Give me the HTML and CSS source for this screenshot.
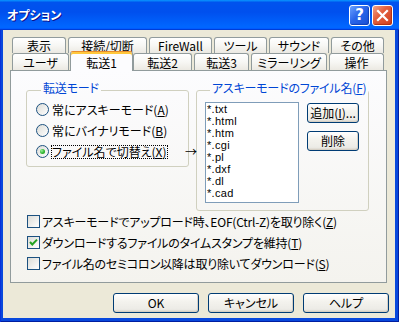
FILE: index.html
```html
<!DOCTYPE html>
<html lang="ja">
<head>
<meta charset="utf-8">
<title>オプション</title>
<link rel="stylesheet" href="styles.css">
</head>
<body>
<div class="window">
  <div class="titlebar">
    <span class="title">オプション</span>
    <div class="caption-buttons">
      <span class="cap help">?</span>
      <span class="cap close"><svg width="19" height="19" viewBox="0 0 19 19"><path d="M5 5 L14 14 M14 5 L5 14" stroke="#fff" stroke-width="2.2" stroke-linecap="square"/></svg></span>
    </div>
  </div>
  <div class="client">
    <div class="tabs">
      <div class="tabrow row1">
        <div class="tab w54">表示</div>
        <div class="tab w79">接続/切断</div>
        <div class="tab w63">FireWall</div>
        <div class="tab w53">ツール</div>
        <div class="tab w60">サウンド</div>
        <div class="tab w53">その他</div>
      </div>
      <div class="tabrow row2">
        <div class="tab w57">ユーザ</div>
        <div class="tab sel">転送1</div>
        <div class="tab w59 after-sel">転送2</div>
        <div class="tab w55">転送3</div>
        <div class="tab w76">ミラーリング</div>
        <div class="tab w55">操作</div>
      </div>
    </div>
    <div class="panel">
      <div class="groups">
        <fieldset class="group g1">
          <legend>転送モード</legend>
          <div class="radio"><span class="rb"></span><span class="lbl">常にアスキーモード(<u>A</u>)</span></div>
          <div class="radio"><span class="rb"></span><span class="lbl">常にバイナリモード(<u>B</u>)</span></div>
          <div class="radio"><span class="rb on"></span><span class="lbl focus">ファイル名で切替え(<u>X</u>)</span></div>
        </fieldset>
        <span class="arrow">→</span>
        <fieldset class="group g2">
          <legend>アスキーモードのファイル名(<u>F</u>)</legend>
          <div class="g2body">
            <div class="listbox">
              <div class="item">*.txt</div>
              <div class="item">*.html</div>
              <div class="item">*.htm</div>
              <div class="item">*.cgi</div>
              <div class="item">*.pl</div>
              <div class="item">*.dxf</div>
              <div class="item">*.dl</div>
              <div class="item">*.cad</div>
            </div>
            <div class="side">
              <span class="btn small">追加(<u>I</u>)...</span>
              <span class="btn small">削除</span>
            </div>
          </div>
        </fieldset>
      </div>
      <div class="checks">
        <div class="check"><span class="cb"></span><span class="clbl">アスキーモードでアップロード時、EOF(Ctrl-Z)を取り除く(<u>Z</u>)</span></div>
        <div class="check"><span class="cb"><svg width="11" height="11" viewBox="0 0 11 11"><path d="M2 5 L4.3 7.5 L9 2.6" fill="none" stroke="#21A121" stroke-width="2"/></svg></span><span class="clbl">ダウンロードするファイルのタイムスタンプを維持(<u>T</u>)</span></div>
        <div class="check"><span class="cb"></span><span class="clbl">ファイル名のセミコロン以降は取り除いてダウンロード(<u>S</u>)</span></div>
      </div>
    </div>
    <div class="buttons">
      <span class="btn big">OK</span>
      <span class="btn big">キャンセル</span>
      <span class="btn big">ヘルプ</span>
    </div>
  </div>
</div>
</body>
</html>
```
FILE: styles.css
```css
* { box-sizing: border-box; }
html, body { margin: 0; padding: 0; }
body {
  width: 399px;
  height: 322px;
  overflow: hidden;
  background: #fff;
  font-family: "Noto Sans CJK JP", "Noto Sans", sans-serif;
  font-size: 12px;
  line-height: 12px;
  color: #000;
  font-feature-settings: "palt";
}
.window {
  width: 399px;
  height: 322px;
  display: flex;
  flex-direction: column;
  background: #0848DC;
  box-shadow: inset 1px 0 #0831D9, inset -1px 0 #001EA0, inset 0 -1px #001EA0;
}
.titlebar {
  height: 30px;
  flex: none;
  display: flex;
  align-items: center;
  justify-content: space-between;
  padding: 0 6px 0 7px;
  background: linear-gradient(180deg, #0997ff, #0053ee 8%, #0050ee 40%, #06f 88%, #06f 93%, #005bff 95%, #003dd7 96%, #003dd7);
}
.title {
  color: #fff;
  font-weight: bold;
  font-size: 12px;
  line-height: 14px;
  text-shadow: 1px 1px #0f1089;
}
.caption-buttons { display: flex; gap: 2px; }
.cap {
  width: 21px;
  height: 21px;
  border: 1px solid #fff;
  border-radius: 3px;
  display: flex;
  align-items: center;
  justify-content: center;
  color: #fff;
}
.help {
  background: linear-gradient(135deg, #6aa2ff 0%, #2a66ea 45%, #1a4fd4 100%);
  box-shadow: inset -1px -1px 1px #1140b8;
  font-family: "DejaVu Sans", sans-serif;
  font-weight: bold;
  font-size: 15px;
  line-height: 15px;
}
.close {
  background: linear-gradient(135deg, #f3a489 0%, #e3603e 40%, #cf3f1e 100%);
  box-shadow: inset -1px -1px 1px #b03010;
}
.client {
  flex: 1;
  margin: 0 4px 4px 3px;
  background: #ECE9D8;
  padding-top: 7px;
}
.tabs { margin-left: 7px; padding-left: 2px; }
.tabrow { display: flex; }
.row1 { height: 16px; gap: 2px; }
.row2 { height: 17px; align-items: flex-end; }
.tab {
  height: 100%;
  border: 1px solid #919B9C;
  border-bottom: none;
  border-radius: 3px 3px 0 0;
  background: linear-gradient(180deg, #ffffff 0%, #f7f7f4 50%, #ebe9e2 100%);
  display: flex;
  align-items: center;
  justify-content: center;
  white-space: nowrap;
  padding-top: 1px;
}
.row2 .tab { height: 17px; margin-left: 2px; }
.row2 .tab:first-child { margin-left: 0; }
.w53 { width: 53px; }
.w54 { width: 54px; }
.w55 { width: 55px; }
.w57 { width: 57px; }
.w59 { width: 59px; }
.w60 { width: 60px; }
.w63 { width: 63px; }
.w76 { width: 76px; }
.w79 { width: 79px; }
.row2 .tab.sel {
  width: 63px;
  height: 20px;
  margin-left: 1px;
  margin-bottom: -1px;
  position: relative;
  z-index: 2;
  border-top-color: #E68B2C;
  background: #FCFCFE;
  box-shadow: inset 0 2px #FFC83C;
  padding-top: 2px;
  padding-bottom: 0;
}
.row2 .tab.after-sel { margin-left: 0; }
.panel {
  margin-left: 7px;
  width: 377px;
  height: 213px;
  border: 1px solid #919B9C;
  background: linear-gradient(180deg, #FCFCFE 0%, #F4F3EE 100%);
  padding: 11px 0 0 15px;
}
.groups {
  display: flex;
  align-items: flex-start;
  position: relative;
}
.group {
  margin: 0;
  border: 1px solid #D0D0BF;
  border-radius: 3px;
  min-width: 0;
}
.group legend {
  margin-left: 5px;
  padding: 0 2px 4px;
  color: #0046D5;
  line-height: 12px;
  white-space: nowrap;
  letter-spacing: -0.2px;
}
.g1 { width: 163px; padding: 1px 0 4px 9px; }
.g2 { width: 173px; margin-left: 7px; padding: 4px 0 7px 8px; }
.radio { display: flex; align-items: center; height: 21px; }
.rb {
  flex: none;
  width: 13px;
  height: 13px;
  border-radius: 50%;
  border: 1px solid #1C5180;
  background: linear-gradient(135deg, #DCDCD7 0%, #FFFFFF 100%);
  display: flex;
  align-items: center;
  justify-content: center;
}
.rb.on::after {
  content: "";
  width: 5px;
  height: 5px;
  border-radius: 50%;
  background: radial-gradient(circle at 35% 35%, #9bf09b 0%, #2fb52f 55%, #1d8f1d 100%);
}
.lbl {
  margin-left: 2px;
  border: 1px dotted transparent;
  white-space: nowrap;
  line-height: 12px;
}
.lbl.focus { border-color: #000; }
.arrow {
  position: absolute;
  left: 159px;
  top: 64px;
  line-height: 12px;
  font-feature-settings: normal;
}
.g2body { display: flex; align-items: flex-start; }
.listbox {
  width: 94px;
  height: 101px;
  border: 1px solid #7F9DB9;
  background: #fff;
  padding-left: 1px;
}
.item {
  height: 12px;
  font-family: "Liberation Sans", Arial, sans-serif;
  font-size: 11px;
  line-height: 12px;
  letter-spacing: 0.3px;
  overflow: visible;
}
.side {
  display: flex;
  flex-direction: column;
  margin-left: 8px;
  margin-top: 1px;
  gap: 8px;
}
.btn {
  display: flex;
  align-items: center;
  justify-content: center;
  border: 1px solid #003C74;
  border-radius: 3px;
  background: linear-gradient(180deg, #FFFFFF 0%, #F4F3EE 40%, #ECEBE6 85%, #D6D0C5 100%);
  box-shadow: inset -1px -1px #D6D0C5;
  white-space: nowrap;
}
.btn.small { width: 52px; height: 20px; }
.checks { margin-left: 1px; }
.check { display: flex; align-items: center; height: 21px; }
.cb {
  flex: none;
  width: 13px;
  height: 13px;
  border: 1px solid #1C5180;
  background: linear-gradient(135deg, #DCDCD7 0%, #FFFFFF 100%);
  display: flex;
}
.clbl { margin-left: 2px; white-space: nowrap; letter-spacing: -0.2px; }
.buttons {
  display: flex;
  justify-content: flex-end;
  gap: 9px;
  padding-right: 6px;
  margin-top: 10px;
}
.btn.big { width: 86px; height: 20px; }
```
